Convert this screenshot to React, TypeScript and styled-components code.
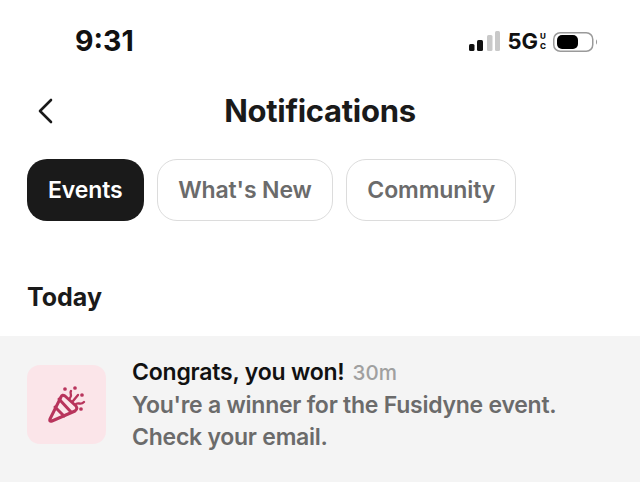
import React from 'react';
import styled, { createGlobalStyle } from 'styled-components';

const GlobalStyle = createGlobalStyle`
    html, body {
        margin: 0;
        padding: 0;
        background: #ffffff;
    }
    body {
        font-family: Inter, "Liberation Sans", sans-serif;
    }
`;

const Screen = styled.div`
    width: 640px;
    height: 482px;
    overflow: hidden;
    display: flex;
    flex-direction: column;
    background: #ffffff;
`;

const StatusBar = styled.div`
    height: 80px;
    flex: none;
    box-sizing: border-box;
    padding: 25px 42px 0 75px;
    display: flex;
    justify-content: space-between;
    align-items: flex-start;
`;

const Clock = styled.span`
    font-size: 28.5px;
    line-height: 32px;
    font-weight: 700;
    color: #111111;
`;

const StatusIcons = styled.div`
    display: flex;
    align-items: center;
    height: 32px;
    margin-top: 1px;
`;

const Header = styled.header`
    height: 62px;
    flex: none;
    display: flex;
    align-items: center;
    justify-content: center;
    position: relative;
`;

const BackButton = styled.button`
    position: absolute;
    left: 36px;
    top: 18px;
    width: 20px;
    height: 26px;
    padding: 0;
    border: none;
    background: none;
`;

const Title = styled.h1`
    margin: 0;
    font-size: 31px;
    line-height: 36px;
    font-weight: 700;
    letter-spacing: -0.3px;
    color: #1a1a1a;
`;

const Tabs = styled.div`
    display: flex;
    gap: 13.5px;
    padding: 17px 0 0 27px;
    flex: none;
`;

const Tab = styled.div<{ $active?: boolean }>`
    height: 62px;
    box-sizing: border-box;
    padding: 0 ${(p) => (p.$active ? '21px' : '20px')};
    display: flex;
    align-items: center;
    border-radius: 20px;
    font-size: 23px;
    font-weight: 600;
    letter-spacing: -0.1px;
    background: ${(p) => (p.$active ? '#1a1a1a' : '#ffffff')};
    color: ${(p) => (p.$active ? '#ffffff' : '#6b6b6b')};
    border: ${(p) => (p.$active ? 'none' : '1.5px solid #dcdcdc')};
`;

const SectionTitle = styled.h2`
    margin: 0;
    padding: 60px 0 0 27px;
    font-size: 25px;
    line-height: 32px;
    font-weight: 700;
    color: #1a1a1a;
    flex: none;
`;

const NotificationRow = styled.div`
    margin-top: 23px;
    flex: 1;
    background: #f4f4f4;
    display: flex;
    gap: 26px;
    padding: 21px 0 0 27px;
`;

const IconTile = styled.div`
    width: 79px;
    height: 79px;
    flex: none;
    margin-top: 8px;
    border-radius: 13px;
    background: #fbe5e9;
    display: flex;
    align-items: center;
    justify-content: center;
`;

const NotificationBody = styled.div`
    display: flex;
    flex-direction: column;
`;

const NotificationHead = styled.div`
    display: flex;
    align-items: baseline;
    gap: 8px;
    height: 32px;
`;

const NotificationTitle = styled.span`
    font-size: 23px;
    line-height: 30px;
    font-weight: 600;
    letter-spacing: -0.2px;
    color: #111111;
`;

const NotificationTime = styled.span`
    font-size: 20.5px;
    line-height: 30px;
    font-weight: 500;
    color: #a0a0a0;
`;

const NotificationText = styled.p`
    margin: 0;
    font-size: 23px;
    line-height: 32px;
    font-weight: 600;
    letter-spacing: -0.25px;
    color: #6b6b6b;
`;

const SignalIcon = () => (
    <svg width="31" height="24" viewBox="0 0 31 24">
        <rect x="0" y="14" width="5.5" height="7" rx="1.5" fill="#111" />
        <rect x="8" y="10" width="6" height="11" rx="1.5" fill="#111" />
        <rect x="18" y="5" width="5.5" height="16" rx="1.5" fill="#c9c9c9" />
        <rect x="26" y="1" width="5" height="20" rx="1.5" fill="#c9c9c9" />
    </svg>
);

const NetworkLabel = styled.span`
    margin: 0 0 2px 7px;
    font-size: 22px;
    line-height: 26px;
    font-weight: 700;
    color: #111111;
`;

const NetworkSuffix = styled.span`
    display: flex;
    flex-direction: column;
    margin: 0 0 2px 2px;
    font-size: 8px;
    line-height: 10px;
    font-weight: 800;
    color: #111111;
`;

const BatteryIcon = () => (
    <svg width="45" height="22" viewBox="0 0 45 22" style={{ marginLeft: 7 }}>
        <rect x="0.75" y="1.75" width="39" height="18.5" rx="6.5" fill="none" stroke="#9a9a9a" strokeWidth="1.5" />
        <rect x="4" y="4" width="21" height="14" rx="5" fill="#000" />
        <path d="M43 8.5c1.4.5 1.4 4.5 0 5z" fill="#9a9a9a" />
    </svg>
);

const ConfettiIcon = () => (
    <svg width="38" height="38" viewBox="0 0 38 38" fill="none" stroke="#b8345c" strokeWidth="3" strokeLinecap="round" strokeLinejoin="round">
        <path d="M2 33 Q1 36 4 35 L27 25 Q30 23 28 20 L17 10 Q14 8 13 11 Z" />
        <path d="M7 21 L16 30" />
        <path d="M11 13 L23 26" />
        <path d="M22 12 C 25 9 21 8 23 5" strokeWidth="2.4" />
        <path d="M25 15 L30 9" strokeWidth="2.4" />
        <path d="M27 19 C 30 15 32 20 36 16" strokeWidth="2.4" />
        <circle cx="17" cy="3" r="1.1" fill="#b8345c" strokeWidth="1.5" />
        <circle cx="27" cy="2" r="1.1" fill="#b8345c" strokeWidth="1.5" />
        <circle cx="34" cy="9" r="1.1" fill="#b8345c" strokeWidth="1.5" />
        <circle cx="33" cy="23" r="1.1" fill="#b8345c" strokeWidth="1.5" />
    </svg>
);

const App = () => (
    <Screen>
        <GlobalStyle />
        <StatusBar>
            <Clock>9:31</Clock>
            <StatusIcons>
                <SignalIcon />
                <NetworkLabel>5G</NetworkLabel>
                <NetworkSuffix>
                    <span>U</span>
                    <span>C</span>
                </NetworkSuffix>
                <BatteryIcon />
            </StatusIcons>
        </StatusBar>
        <Header>
            <BackButton aria-label="Back">
                <svg width="20" height="26" viewBox="0 0 20 26" fill="none" stroke="#1a1a1a" strokeWidth="2.6" strokeLinecap="round" strokeLinejoin="round">
                    <path d="M15 2 L4 13 L15 24" />
                </svg>
            </BackButton>
            <Title>Notifications</Title>
        </Header>
        <Tabs>
            <Tab $active>Events</Tab>
            <Tab>What's New</Tab>
            <Tab>Community</Tab>
        </Tabs>
        <SectionTitle>Today</SectionTitle>
        <NotificationRow>
            <IconTile>
                <ConfettiIcon />
            </IconTile>
            <NotificationBody>
                <NotificationHead>
                    <NotificationTitle>Congrats, you won!</NotificationTitle>
                    <NotificationTime>30m</NotificationTime>
                </NotificationHead>
                <NotificationText>You're a winner for the Fusidyne event.</NotificationText>
                <NotificationText>Check your email.</NotificationText>
            </NotificationBody>
        </NotificationRow>
    </Screen>
);

export default App;
